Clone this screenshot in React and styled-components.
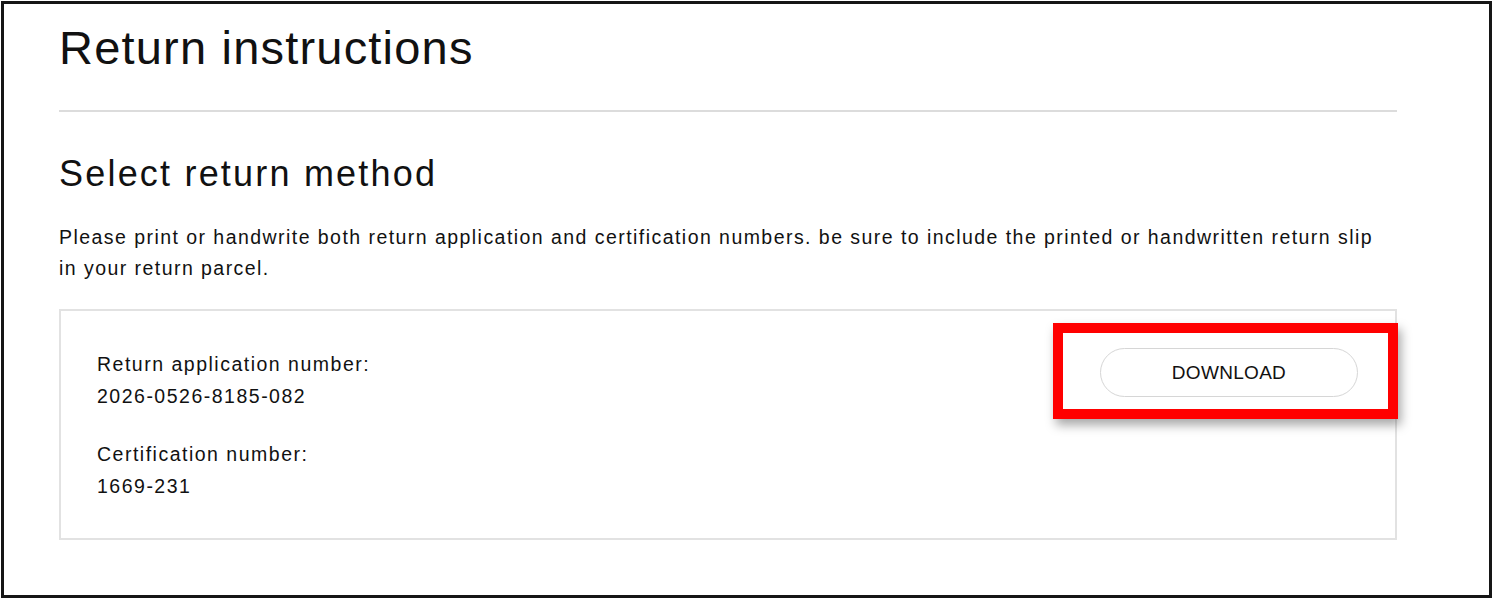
import React from "react";
import styled, { createGlobalStyle } from "styled-components";

const Global = createGlobalStyle`
  html, body { margin: 0; padding: 0; background: #fff; }
  body { font-family: "Liberation Sans", Arial, sans-serif; color: #111; }
  * { box-sizing: border-box; }
`;

const Frame = styled.div`
  margin: 1px;
  width: 1491px;
  height: 597px;
  border: 3px solid #161616;
  padding: 0 92px 0 55px;
  overflow: hidden;
`;

const Title = styled.h1`
  margin: 0;
  padding-top: 18px;
  font-size: 47px;
  letter-spacing: 1.2px;
  font-weight: 400;
  line-height: 52px;
  color: #111;
`;

const Rule = styled.hr`
  margin: 36px 0 0;
  border: 0;
  border-top: 2px solid #dcdcdc;
`;

const Subtitle = styled.h2`
  margin: 40px 0 0;
  font-size: 36px;
  letter-spacing: 2.2px;
  font-weight: 400;
  line-height: 44px;
  color: #111;
`;

const Paragraph = styled.p`
  margin: 26px 0 0;
  font-size: 19.5px;
  letter-spacing: 1.45px;
  line-height: 31px;
  color: #111;
`;

const Card = styled.div`
  margin-top: 25px;
  border: 2px solid #e2e2e2;
  height: 231px;
  padding: 37px 37px 0 36px;
  display: flex;
  justify-content: space-between;
  align-items: flex-start;
`;

const Info = styled.div`
  display: flex;
  flex-direction: column;
  gap: 26px;
`;

const Field = styled.div`
  font-size: 19.5px;
  letter-spacing: 1.5px;
  line-height: 32px;
  color: #111;
`;

const ButtonWrap = styled.div`
  position: relative;
`;

const Button = styled.button`
  width: 258px;
  height: 49px;
  border: 1.5px solid #d6d6d6;
  border-radius: 25px;
  background: #fff;
  font-family: "Liberation Sans", Arial, sans-serif;
  font-size: 19px;
  letter-spacing: 0.3px;
  color: #111;
  cursor: pointer;
`;

const Highlight = styled.div`
  position: absolute;
  left: -47px;
  top: -25px;
  width: 345px;
  height: 96px;
  border: 10px solid #ff0000;
  box-shadow: 3px 6px 10px rgba(0, 0, 0, 0.35);
  pointer-events: none;
`;

export default function App() {
  return (
    <>
      <Global />
      <Frame>
        <Title>Return instructions</Title>
        <Rule />
        <Subtitle>Select return method</Subtitle>
        <Paragraph>
          Please print or handwrite both return application and certification numbers. be sure to include the printed or handwritten return slip in your return parcel.
        </Paragraph>
        <Card>
          <Info>
            <Field>
              Return application number:
              <br />
              2026-0526-8185-082
            </Field>
            <Field>
              Certification number:
              <br />
              1669-231
            </Field>
          </Info>
          <ButtonWrap>
            <Button>DOWNLOAD</Button>
            <Highlight />
          </ButtonWrap>
        </Card>
      </Frame>
    </>
  );
}
